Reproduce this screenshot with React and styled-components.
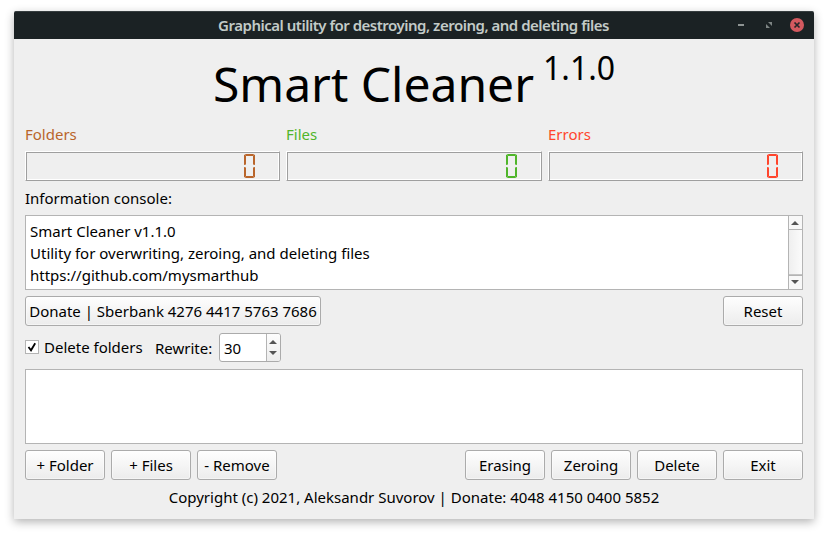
import React, { useState } from "react";
import styled, { createGlobalStyle } from "styled-components";

const GlobalStyle = createGlobalStyle`
  * { box-sizing: border-box; }
  body { margin: 0; background: #fff; overflow: hidden; }
`;

const Desktop = styled.div`
  width: 828px;
  height: 536px;
  padding: 11px 14px 17px;
  background: #fff;
`;

const Window = styled.main`
  display: flex;
  flex-direction: column;
  height: 508px;
  background: #efefef;
  border-radius: 2px 2px 0 0;
  box-shadow: 0 3px 10px rgba(0, 0, 0, 0.3);
  font: 15px/20px "Noto Sans", sans-serif;
  color: #000;
`;

const TitleBar = styled.header`
  display: grid;
  grid-template-columns: 1fr auto 1fr;
  align-items: center;
  flex: none;
  height: 28px;
  padding-right: 10px;
  background: #1b2224;
  border-top: 1px solid #363d3f;
  border-radius: 2px 2px 0 0;
`;

const Caption = styled.span`
  grid-column: 2;
  padding-left: 9px;
  margin-top: -2px;
  font-size: 15px;
  font-weight: 600;
  letter-spacing: -0.49px;
  white-space: nowrap;
  color: #c3cbc8;
`;

const WindowControls = styled.div`
  display: flex;
  justify-content: flex-end;
  gap: 14px;
  margin-top: -1px;
  svg { display: block; }
`;

const Body = styled.div`
  display: flex;
  flex-direction: column;
  padding: 0 11px;
`;

const Heading = styled.h1`
  display: flex;
  justify-content: center;
  align-items: flex-start;
  height: 85px;
  margin: 0;
  font-weight: 400;
  font-size: 48px;
  line-height: 90px;
  white-space: pre;
`;

const Version = styled.span`
  margin-left: 9px;
  font-size: 32px;
  line-height: 58px;
`;

const Counters = styled.section`
  display: grid;
  grid-template-columns: 255px 256px 255px;
  gap: 6px;
`;

const Counter = styled.div`
  color: ${(p) => p.$color};
`;

const CounterLabel = styled.div`
  height: 27px;
  line-height: 21px;
`;

const Lcd = styled.div`
  display: flex;
  justify-content: flex-end;
  height: 30px;
  padding: 2px 24px 0 0;
  border: 1px solid;
  border-color: #fff #9f9f9f #9f9f9f #fff;
  box-shadow: inset 1px 1px #9f9f9f, inset -1px -1px #fff;
`;

const ConsoleLabel = styled.div`
  height: 34px;
  line-height: 35px;
`;

const Console = styled.section`
  display: flex;
  height: 75px;
  background: #fff;
  border: 1px solid #b4b4b4;
`;

const Log = styled.div`
  flex: 1;
  padding: 4px 4px;
  line-height: 22px;
`;

const ScrollBar = styled.div`
  display: flex;
  flex-direction: column;
  width: 14px;
  border-left: 1px solid #b4b4b4;
  background: linear-gradient(90deg, #efefef, #fbfbfb);
`;

const ScrollArrow = styled.div`
  display: grid;
  place-items: center;
  height: 14px;
  padding: ${(p) => (p.$down ? "0 1px 2px 0" : "0 1px 0 0")};
  background: #f8f8f8;
  color: #555;
  border: 0 solid #b4b4b4;
  border-width: ${(p) => (p.$down ? "1px 0 0" : "0 0 1px")};
`;

const ScrollTrack = styled.div`
  flex: 1;
  border-bottom: 1px solid #c4c4c4;
`;

const Row = styled.div`
  display: flex;
  align-items: center;
  gap: 6px;
  height: 30px;
  margin-top: 6px;
`;

const Spacer = styled.div`
  flex: 1;
`;

const Button = styled.button`
  width: ${(p) => p.$width || 80}px;
  height: 30px;
  padding: 0;
  border: 1px solid #ababab;
  border-radius: 3px;
  background: linear-gradient(#fefefe, #ececec);
  box-shadow: inset 0 0 0 1px rgba(255, 255, 255, 0.45);
  font: inherit;
  line-height: 28px;
  color: #000;
  white-space: nowrap;
`;

const Options = styled.div`
  display: flex;
  align-items: center;
  height: 29px;
  margin-top: 7px;
`;

const CheckLabel = styled.label`
  display: flex;
  align-items: center;
  gap: 5px;
  width: 130px;
  height: 29px;
  margin-top: -1px;
  line-height: 28px;
  white-space: nowrap;
`;

const CheckBox = styled.span`
  display: grid;
  place-items: center;
  width: 14px;
  height: 14px;
  border: 1px solid #b4b4b4;
  background: #fff;
`;

const RewriteLabel = styled.span`
  width: 64px;
  padding-top: 1px;
  line-height: 28px;
`;

const SpinBox = styled.div`
  display: flex;
  width: 62px;
  height: 29px;
  border: 1px solid #ababab;
  border-radius: 3px;
  background: #fff;
  overflow: hidden;
`;

const SpinValue = styled.span`
  width: 46px;
  padding-left: 4px;
  line-height: 29px;
`;

const SpinButtons = styled.span`
  display: flex;
  flex: 1;
  flex-direction: column;
  align-items: center;
  justify-content: space-between;
  padding: 6px 1px 6px 0;
  border-left: 1px solid #b4b4b4;
  background: linear-gradient(#fdfdfd, #ededed);
  color: #555;
`;

const FileList = styled.section`
  height: 75px;
  margin-top: 7px;
  background: #fff;
  border: 1px solid #b4b4b4;
`;

const Footer = styled.footer`
  height: 36px;
  line-height: 34px;
  text-align: center;
`;

function Arrow({ down }) {
  return (
    <svg width="8" height="4" viewBox="0 0 8 4" display="block">
      <path d={down ? "M0 0H8L4 4Z" : "M0 4H8L4 0Z"} fill="currentColor" />
    </svg>
  );
}

function LcdZero() {
  return (
    <svg width="11" height="24" viewBox="0 0 11 24">
      <g fill="currentColor">
        <path d="M1 0H10L9 2H2ZM1 24H10L9 22H2Z" />
        <path d="M0 .5L2 1.5V10.5L0 11ZM11 .5L9 1.5V10.5L11 11Z" />
        <path d="M0 13L2 13.5V22.5L0 23.5ZM11 13L9 13.5V22.5L11 23.5Z" />
      </g>
    </svg>
  );
}

function MinimizeIcon() {
  return (
    <svg width="14" height="14" viewBox="0 0 14 14">
      <path d="M4 6H10V8H4Z" fill="#8e9493" />
    </svg>
  );
}

function MaximizeIcon() {
  return (
    <svg width="14" height="14" viewBox="0 0 14 14">
      <path d="M6 4H10V8ZM4 6V10H8Z" fill="#7e8584" />
    </svg>
  );
}

function CloseIcon() {
  return (
    <svg width="14" height="14" viewBox="0 0 14 14">
      <circle cx="7" cy="7" r="7" fill="#d3595f" />
      <path d="M4.5 4.5L9.5 9.5M9.5 4.5L4.5 9.5" stroke="#252629" strokeWidth="1.7" />
    </svg>
  );
}

const counters = [
  { label: "Folders", color: "#b9652b" },
  { label: "Files", color: "#4fb52a" },
  { label: "Errors", color: "#ff452d" },
];

export default function App() {
  const [deleteFolders, setDeleteFolders] = useState(true);
  return (
    <Desktop>
      <GlobalStyle />
      <Window>
        <TitleBar>
          <Caption>Graphical utility for destroying, zeroing, and deleting files</Caption>
          <WindowControls>
            <MinimizeIcon />
            <MaximizeIcon />
            <CloseIcon />
          </WindowControls>
        </TitleBar>
        <Body>
          <Heading>
            Smart Cleaner<Version>1.1.0</Version>
          </Heading>
          <Counters>
            {counters.map((c) => (
              <Counter key={c.label} $color={c.color}>
                <CounterLabel>{c.label}</CounterLabel>
                <Lcd><LcdZero /></Lcd>
              </Counter>
            ))}
          </Counters>
          <ConsoleLabel>Information console:</ConsoleLabel>
          <Console>
            <Log>
              <div>Smart Cleaner v1.1.0</div>
              <div>Utility for overwriting, zeroing, and deleting files</div>
              <div>https://github.com/mysmarthub</div>
            </Log>
            <ScrollBar>
              <ScrollArrow><Arrow /></ScrollArrow>
              <ScrollTrack />
              <ScrollArrow $down><Arrow down /></ScrollArrow>
            </ScrollBar>
          </Console>
          <Row>
            <Button $width={296}>Donate | Sberbank 4276 4417 5763 7686</Button>
            <Spacer />
            <Button>Reset</Button>
          </Row>
          <Options>
            <CheckLabel onClick={() => setDeleteFolders(!deleteFolders)}>
              <CheckBox>
                {deleteFolders && (
                  <svg width="10" height="10" viewBox="0 0 10 10">
                    <path d="M1.5 5L4 8.3L8.2 1.2" fill="none" stroke="#000" strokeWidth="1.8" />
                  </svg>
                )}
              </CheckBox>
              Delete folders
            </CheckLabel>
            <RewriteLabel>Rewrite:</RewriteLabel>
            <SpinBox>
              <SpinValue>30</SpinValue>
              <SpinButtons><Arrow /><Arrow down /></SpinButtons>
            </SpinBox>
          </Options>
          <FileList />
          <Row>
            <Button>+ Folder</Button>
            <Button>+ Files</Button>
            <Button>- Remove</Button>
            <Spacer />
            <Button>Erasing</Button>
            <Button>Zeroing</Button>
            <Button>Delete</Button>
            <Button>Exit</Button>
          </Row>
          <Footer>Copyright (c) 2021, Aleksandr Suvorov | Donate: 4048 4150 0400 5852</Footer>
        </Body>
      </Window>
    </Desktop>
  );
}
